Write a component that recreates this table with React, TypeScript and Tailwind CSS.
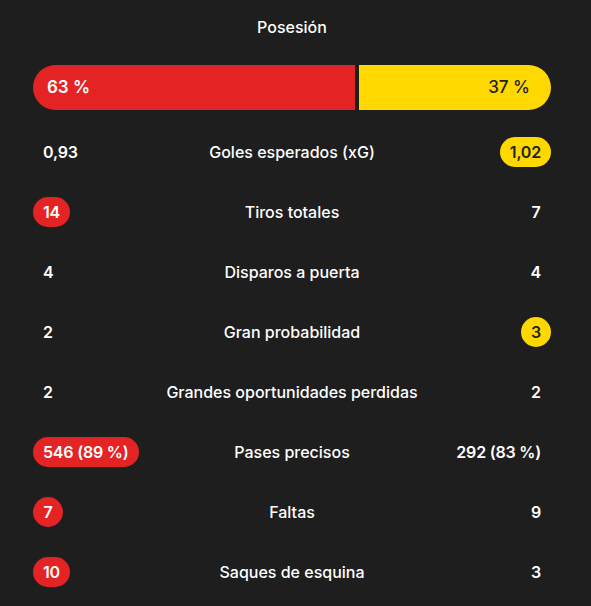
import React from "react";

type Side = "home" | "away" | null;

type Stat = {
  label: string;
  home: string;
  away: string;
  winner: Side;
};

const stats: Stat[] = [
  { label: "Goles esperados (xG)", home: "0,93", away: "1,02", winner: "away" },
  { label: "Tiros totales", home: "14", away: "7", winner: "home" },
  { label: "Disparos a puerta", home: "4", away: "4", winner: null },
  { label: "Gran probabilidad", home: "2", away: "3", winner: "away" },
  { label: "Grandes oportunidades perdidas", home: "2", away: "2", winner: null },
  { label: "Pases precisos", home: "546 (89 %)", away: "292 (83 %)", winner: "home" },
  { label: "Faltas", home: "7", away: "9", winner: "home" },
  { label: "Saques de esquina", home: "10", away: "3", winner: "home" },
];

function Value({ value, highlight, side }: { value: string; highlight: boolean; side: "home" | "away" }) {
  const base = "h-[30px] min-w-[30px] px-[10px] rounded-full flex items-center justify-center text-[16px] font-semibold leading-none tracking-[-0.2px]";
  if (!highlight) return <span className={base + " text-white"}>{value}</span>;
  return side === "home" ? (
    <span className={base + " bg-[#e42424] text-white"}>{value}</span>
  ) : (
    <span className={base + " bg-[#ffd800] text-[#222222]"}>{value}</span>
  );
}

export default function App(): React.JSX.Element {
  return (
    <div
      className="w-[591px] h-[606px] bg-[#1e1e1e] text-white pl-[33px] pr-[40px] overflow-hidden"
      style={{ fontFamily: "Inter, 'Noto Sans', sans-serif" }}
    >
      {/* Possession */}
      <div className="pt-[17px] text-center text-[16px] font-medium leading-5">Posesión</div>
      <div className="mt-[28px] flex h-[45px] gap-[4px]">
        <div className="w-[322px] shrink-0 bg-[#e42424] rounded-l-full flex items-center pl-[14px] text-[17px] font-semibold">
          63 %
        </div>
        <div className="flex-1 bg-[#ffd800] rounded-r-full flex items-center justify-end pr-[21px] text-[17px] font-medium text-[#222222]">
          37 %
        </div>
      </div>

      {/* Stat rows */}
      <div className="mt-[12px] flex flex-col">
        {stats.map((s) => (
          <div key={s.label} className="h-[60px] grid grid-cols-[1fr_auto_1fr] items-center">
            <div className="flex justify-start">
              <Value value={s.home} highlight={s.winner === "home"} side="home" />
            </div>
            <div className="text-center text-[16px] font-medium">{s.label}</div>
            <div className="flex justify-end">
              <Value value={s.away} highlight={s.winner === "away"} side="away" />
            </div>
          </div>
        ))}
      </div>
    </div>
  );
}
